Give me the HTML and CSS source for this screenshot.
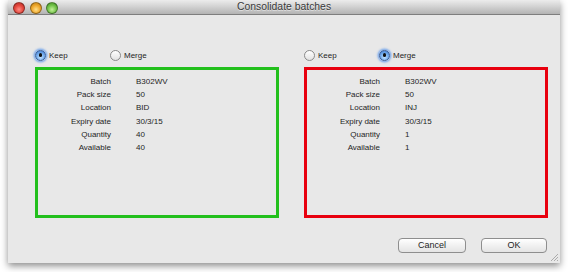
FILE: index.html
```html
<!DOCTYPE html>
<html>
<head>
<meta charset="utf-8">
<link rel="stylesheet" href="styles.css">
</head>
<body>
<div class="window">
  <div class="titlebar">
    <div class="lights">
      <span class="light red"></span>
      <span class="light orange"></span>
      <span class="light green"></span>
    </div>
    <div class="title">Consolidate batches</div>
  </div>
  <div class="content">
    <div class="col">
      <div class="radios">
        <div class="opt"><span class="radio on"></span><span>Keep</span></div>
        <div class="opt"><span class="radio"></span><span>Merge</span></div>
      </div>
      <div class="panel keep">
        <div class="row"><span class="label">Batch</span><span class="value">B302WV</span></div>
        <div class="row"><span class="label">Pack size</span><span class="value">50</span></div>
        <div class="row"><span class="label">Location</span><span class="value">BID</span></div>
        <div class="row"><span class="label">Expiry date</span><span class="value">30/3/15</span></div>
        <div class="row"><span class="label">Quantity</span><span class="value">40</span></div>
        <div class="row"><span class="label">Available</span><span class="value">40</span></div>
      </div>
    </div>
    <div class="col">
      <div class="radios">
        <div class="opt"><span class="radio"></span><span>Keep</span></div>
        <div class="opt"><span class="radio on"></span><span>Merge</span></div>
      </div>
      <div class="panel merge">
        <div class="row"><span class="label">Batch</span><span class="value">B302WV</span></div>
        <div class="row"><span class="label">Pack size</span><span class="value">50</span></div>
        <div class="row"><span class="label">Location</span><span class="value">INJ</span></div>
        <div class="row"><span class="label">Expiry date</span><span class="value">30/3/15</span></div>
        <div class="row"><span class="label">Quantity</span><span class="value">1</span></div>
        <div class="row"><span class="label">Available</span><span class="value">1</span></div>
      </div>
    </div>
  </div>
  <div class="buttons">
    <button class="btn cancel">Cancel</button>
    <button class="btn ok">OK</button>
  </div>
  <svg class="grip" width="8" height="8" viewBox="0 0 8 8">
    <line x1="1" y1="8" x2="8" y2="1" stroke="#9a9a9a" stroke-width="0.8"/>
    <line x1="4" y1="8" x2="8" y2="4" stroke="#9a9a9a" stroke-width="0.8"/>
    <line x1="7" y1="8" x2="8" y2="7" stroke="#9a9a9a" stroke-width="0.8"/>
  </svg>
</div>
</body>
</html>
```
FILE: styles.css
```css
html, body {
  margin: 0;
  padding: 0;
  background: #ffffff;
}
body {
  font-family: "Liberation Sans", Arial, sans-serif;
  color: #1e1e1e;
  width: 569px;
  height: 272px;
  overflow: hidden;
}
.window {
  position: relative;
  width: 552px;
  height: 263px;
  margin-left: 8px;
  background: #e8e8e8;
  display: flex;
  flex-direction: column;
  box-shadow: 0 3px 7px rgba(0, 0, 0, 0.45);
}
.titlebar {
  position: relative;
  height: 14px;
  border-bottom: 1px solid #7e7e7e;
  background: linear-gradient(#ececec, #d6d6d6 40%, #b3b3b3);
  display: flex;
  align-items: center;
  justify-content: center;
}
.lights {
  position: absolute;
  left: 5px;
  top: 2px;
  display: flex;
  gap: 4.5px;
}
.light {
  width: 10px;
  height: 10px;
  border-radius: 50%;
  border: 0.5px solid rgba(0, 0, 0, 0.35);
}
.red {
  background: radial-gradient(circle at 50% 65%, #ff8c84 0%, #e4473d 50%, #b02a22 100%);
}
.orange {
  background: radial-gradient(circle at 50% 65%, #ffe08a 0%, #efa82c 50%, #b97a10 100%);
}
.green {
  background: radial-gradient(circle at 50% 65%, #c4f09a 0%, #74c44a 50%, #3f8a22 100%);
}
.title {
  font-size: 10.4px;
  color: #3a3a3a;
  text-shadow: 0 1px 0 rgba(255, 255, 255, 0.5);
  line-height: 14px;
}
.content {
  display: flex;
  gap: 25px;
  padding: 34px 12px 0 27px;
}
.col {
  width: 244px;
  display: flex;
  flex-direction: column;
}
.radios {
  height: 12px;
  display: flex;
  align-items: center;
  font-size: 8px;
}
.opt {
  width: 75px;
  display: flex;
  align-items: center;
  gap: 3px;
}
.radio {
  box-sizing: border-box;
  width: 11px;
  height: 11px;
  border-radius: 50%;
  border: 1px solid #8a8a8a;
  background: linear-gradient(#ffffff, #e2e2e2);
  display: flex;
  align-items: center;
  justify-content: center;
}
.radio.on {
  border-color: #3a5f9a;
  background: radial-gradient(circle at 50% 70%, #bfe0ff 0%, #6fa8ea 55%, #3c78cf 100%);
  box-shadow: 0 0 2px 1.5px rgba(90, 150, 235, 0.75);
}
.radio.on::after {
  content: "";
  width: 3.5px;
  height: 3.5px;
  border-radius: 50%;
  background: #111;
}
.panel {
  box-sizing: border-box;
  margin-top: 6px;
  height: 151px;
  border: 3px solid;
  padding-top: 5px;
  font-size: 8px;
}
.keep {
  border-color: #22c01c;
}
.merge {
  border-color: #e8000e;
}
.row {
  display: flex;
  height: 13.2px;
  line-height: 13.2px;
}
.label {
  width: 73px;
  text-align: right;
}
.value {
  margin-left: 25px;
}
.buttons {
  margin-top: auto;
  display: flex;
  justify-content: flex-end;
  gap: 15px;
  padding: 0 13px 10px 0;
}
.btn {
  box-sizing: border-box;
  height: 15px;
  padding: 0;
  border: 1px solid #8e8e8e;
  border-radius: 4px;
  background: linear-gradient(#ffffff, #f1f1f1 50%, #e4e4e4);
  font-family: "Liberation Sans", Arial, sans-serif;
  font-size: 9px;
  color: #1e1e1e;
  line-height: 13px;
}
.cancel {
  width: 68px;
}
.ok {
  width: 66px;
}
.grip {
  position: absolute;
  right: 2px;
  bottom: 2px;
}
```
